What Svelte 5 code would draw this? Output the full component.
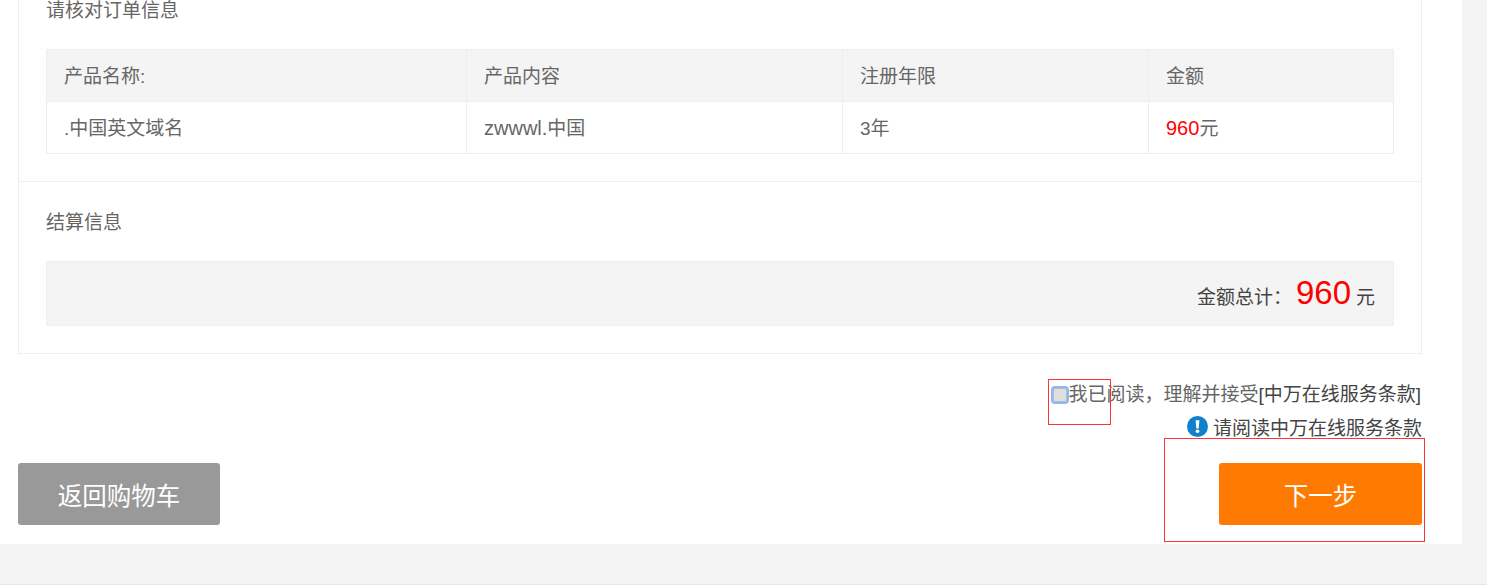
<script>
  const columns = ['产品名称:', '产品内容', '注册年限', '金额'];
</script>

<div class="page">
  <main class="content">
    <section class="card">
      <div class="block first">
        <h2>请核对订单信息</h2>
        <div class="table">
          <div class="row head">
            {#each columns as c}<div class="cell">{c}</div>{/each}
          </div>
          <div class="row">
            <div class="cell">.中国英文域名</div>
            <div class="cell"><span class="latin">zwwwl.</span>中国</div>
            <div class="cell">3年</div>
            <div class="cell"><span class="red latin">960</span>元</div>
          </div>
        </div>
      </div>
      <div class="block second">
        <h2>结算信息</h2>
        <div class="summary">
          <span class="label">金额总计：</span><span class="total">960</span><span class="unit">元</span>
        </div>
      </div>
    </section>

    <div class="agree">
      <span class="check-wrap">
        <span class="check"></span>
        <span class="mark mark-a"></span>
      </span>
      <span class="agree-text">我已阅读，理解并接受<span class="dark">[中万在线服务条款]</span></span>
    </div>
    <div class="notice">
      <svg width="21" height="21" viewBox="0 0 22 22" aria-hidden="true">
        <circle cx="11" cy="11" r="11" fill="#1080cc" />
        <path d="M9 4.500h4l-.8 8.500h-2.400z" fill="#fff" />
        <circle cx="11" cy="16" r="1.900" fill="#fff" />
      </svg>
      <span>请阅读中万在线服务条款</span>
    </div>

    <div class="actions">
      <button class="btn back">返回购物车</button>
      <div class="next-wrap">
        <button class="btn next">下一步</button>
        <span class="mark mark-b"></span>
      </div>
    </div>
  </main>
  <div class="band"></div>
</div>

<style>
  :global(body) {
    margin: 0;
    background: #fff;
  }
  .page {
    height: 588px;
    overflow: hidden;
    font-family: "Liberation Sans", "Noto Sans CJK SC", sans-serif;
    color: #666;
    font-size: 19px;
  }
  .content {
    box-sizing: border-box;
    height: 544px;
    padding: 0 40px 0 18px;
    margin-right: 25px;
    background: #fff;
    box-shadow: 25px 0 0 #f4f4f4;
  }
  .band {
    height: 40px;
    background: #f4f4f4;
    border-bottom: 1px solid #e6e6e6;
  }
  .card {
    box-sizing: border-box;
    width: 1404px;
    height: 354px;
    border: 1px solid #eee;
    border-top: 0;
  }
  .block {
    padding: 0 27px;
  }
  .first {
    height: 182px;
    box-sizing: border-box;
    border-bottom: 1px solid #eee;
  }
  h2 {
    margin: 0;
    font-size: 19px;
    font-weight: 400;
    line-height: 22px;
  }
  .table {
    margin-top: 27px;
    border: 1px solid #eee;
    border-bottom: 0;
  }
  .row {
    display: grid;
    grid-template-columns: 420px 376px 306px 1fr;
    height: 52px;
    box-sizing: border-box;
    border-bottom: 1px solid #eee;
  }
  .head {
    background: #f4f4f4;
  }
  .cell {
    box-sizing: border-box;
    padding-left: 17px;
    line-height: 53px;
    height: 51px;
    border-right: 1px solid #eee;
  }
  .cell:last-child {
    border-right: 0;
  }
  .latin {
    font-size: 20px;
  }
  .red {
    color: #f00;
  }
  .second {
    padding-top: 30px;
  }
  .summary {
    display: flex;
    justify-content: flex-end;
    align-items: baseline;
    box-sizing: border-box;
    height: 65px;
    margin-top: 27px;
    padding: 11px 18px 0 0;
    background: #f4f4f4;
    border: 1px solid #eee;
    color: #444;
  }
  .label {
    margin-right: 4px;
  }
  .total {
    font-size: 33px;
    line-height: 40px;
    color: #f00;
    margin-right: 5px;
  }
  .unit {
    font-size: 19px;
  }
  .agree {
    display: flex;
    justify-content: flex-end;
    align-items: center;
    height: 26px;
    width: 1403px;
    margin-top: 28px;
  }
  .check-wrap {
    position: relative;
    display: block;
    width: 17px;
    height: 18px;
  }
  .check {
    display: block;
    box-sizing: border-box;
    width: 18px;
    height: 18px;
    background: #dedede;
    border: 2px solid #8ab8fa;
    border-radius: 4px;
    box-shadow: inset 0 0 0 1px #bbb;
  }
  .agree-text {
    line-height: 26px;
  }
  .dark {
    color: #444;
  }
  .mark {
    position: absolute;
    box-sizing: border-box;
    border: 1px solid #f33;
    pointer-events: none;
  }
  .mark-a {
    left: -3px;
    top: -7px;
    width: 63px;
    height: 46px;
  }
  .notice {
    display: flex;
    justify-content: flex-end;
    align-items: center;
    gap: 5px;
    width: 1404px;
    height: 24px;
    margin-top: 6px;
    color: #444;
  }
  .actions {
    display: flex;
    justify-content: space-between;
    align-items: flex-start;
    width: 1404px;
    margin-top: 25px;
  }
  .btn {
    display: block;
    height: 62px;
    border: 0;
    border-radius: 3px;
    color: #fff;
    font: inherit;
    padding: 0;
  }
  .back {
    width: 202px;
    background: #999;
    font-size: 24.500px;
  }
  .next-wrap {
    position: relative;
  }
  .next {
    width: 203px;
    background: #ff7a00;
    font-size: 24.500px;
  }
  .mark-b {
    left: -55px;
    top: -25px;
    width: 261px;
    height: 104px;
  }
</style>
